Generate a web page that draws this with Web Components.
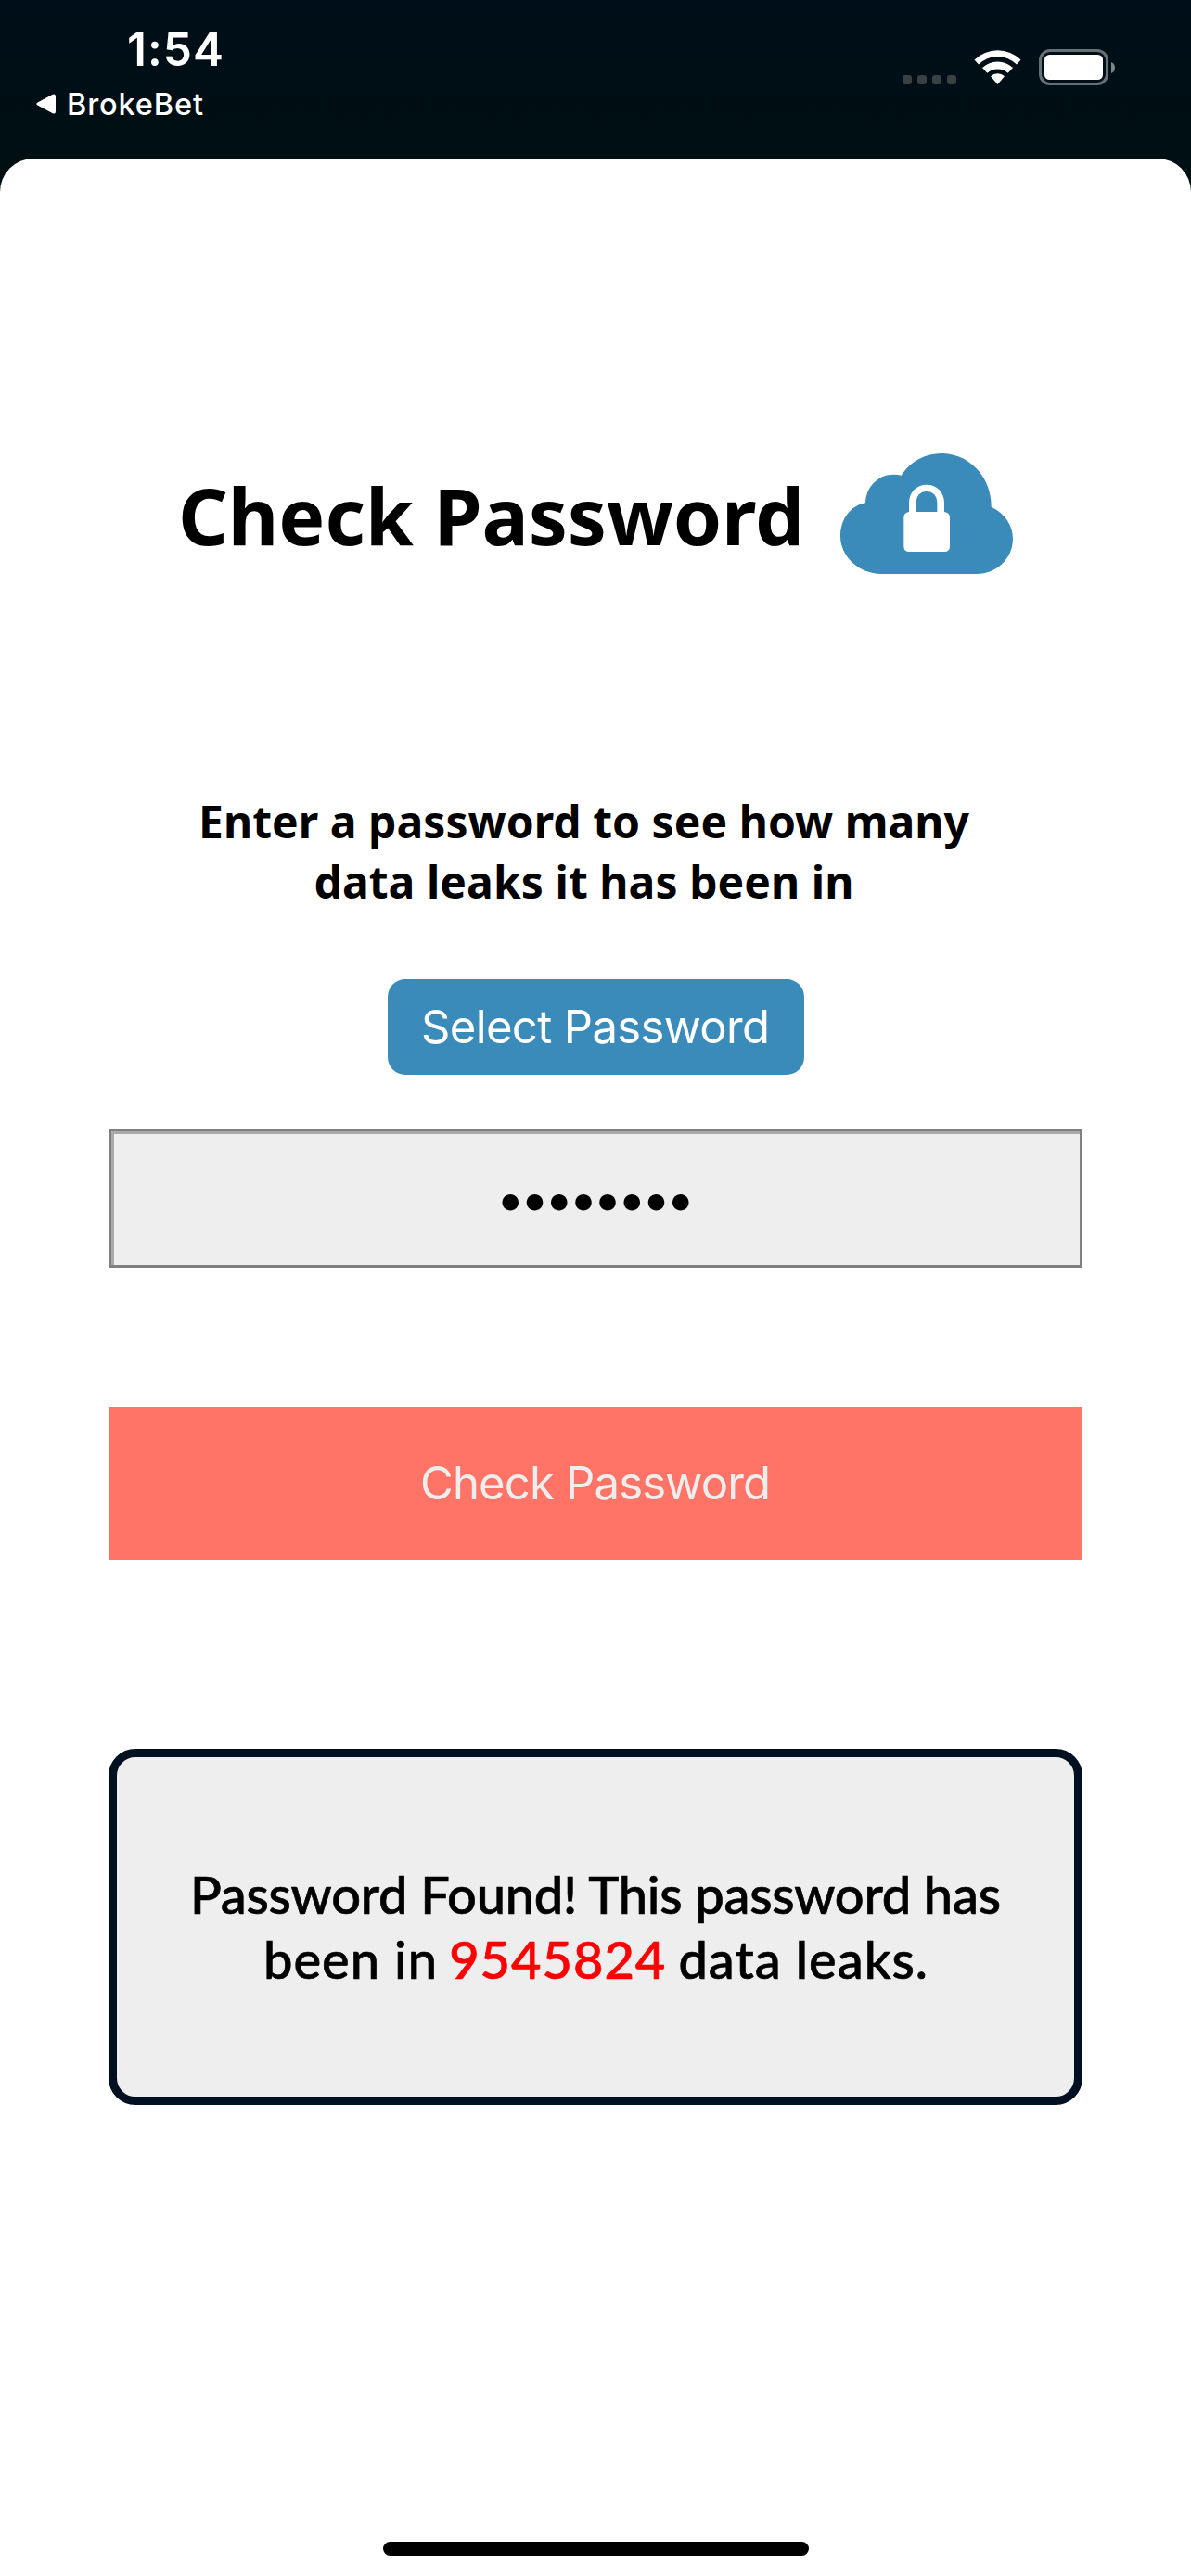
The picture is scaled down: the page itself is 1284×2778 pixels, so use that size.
<!DOCTYPE html>
<html lang="en">
<head>
<meta charset="utf-8">
<meta name="viewport" content="width=device-width">
<title>Check Password</title>
<style>
html,body{margin:0;height:100%;background:#fff}
</style>
</head>
<body>
<password-app></password-app>
<script>
const define = (name, html, setup) => {
  const t = document.createElement('template');
  t.innerHTML = html;
  customElements.define(name, class extends HTMLElement {
    constructor() {
      super();
      this.attachShadow({ mode: 'open' }).append(t.content.cloneNode(true));
    }
    connectedCallback() { if (setup) setup(this); }
  });
};

/* One line of text, tracked so that it spans a given width. */
define('fit-line', `
<style>
  :host{display:block;white-space:nowrap;width:max-content}
  span{display:inline-block}
</style><span><slot></slot></span>`, el => {
  const span = el.shadowRoot.querySelector('span');
  const target = Number(el.getAttribute('span'));
  const chars = el.textContent.trim().length;
  const gap = (target - span.getBoundingClientRect().width) / (chars - 1);
  span.style.letterSpacing = gap + 'px';
  span.style.marginRight = -gap + 'px';
});

define('status-bar', `
<style>
  :host{display:flex;justify-content:space-between;box-sizing:border-box;height:171px;color:#fff;font-family:Inter,sans-serif}
  .left{display:flex;flex-direction:column}
  .time{font-size:49.5px;font-weight:600;line-height:60px;margin:23px 0 0 137px}
  .back{display:flex;align-items:center;gap:12px;margin:8px 0 0 39px;font-size:32.5px;font-weight:450;line-height:40px}
  .back fit-line{margin-top:2px}
  .right{display:flex;align-items:flex-start;margin:53px 81px 0 0}
  svg{display:block}
</style>
<div class="left">
  <fit-line class="time" span="104">1:54</fit-line>
  <div class="back">
    <svg width="21" height="22" viewBox="0 0 21 22"><path d="M2 9.2 17.8.8Q21-.5 21 3V19Q21 22.500 17.800 21.200L2 12.800Q-1.500 11 2 9.200Z" fill="#fff"/></svg>
    <fit-line span="147">BrokeBet</fit-line>
  </div>
</div>
<div class="right">
  <svg width="230" height="40" viewBox="0 0 230 40">
    <g fill="#3a4145"><rect x="0" y="28" width="10" height="10" rx="3"/><rect x="16" y="28" width="10" height="10" rx="3"/><rect x="32" y="28" width="10" height="10" rx="3"/><rect x="48" y="28" width="10" height="10" rx="3"/></g>
    <g fill="#fff">
      <path d="M77.500 11.500A36 36 0 0 1 127.600 11.500L123 16.500A29 29 0 0 0 82 16.500Z"/>
      <path d="M86 20A24 24 0 0 1 119 20L113.700 25.800A16.500 16.500 0 0 0 91.300 25.800Z"/>
      <path d="M95 29.300A11 11 0 0 1 110 29.300L102.500 38Z"/>
    </g>
    <rect x="148.500" y="1.500" width="72" height="36" rx="10.500" fill="none" stroke="#667075" stroke-width="3"/>
    <rect x="153" y="6" width="63" height="27" rx="5.500" fill="#fff"/>
    <path d="M225 14Q229 15.500 229 20T225 26Z" fill="#7d8588"/>
  </svg>
</div>`);

define('cloud-lock', `
<style>:host{display:block;width:186px;height:130px}svg{display:block;width:100%;height:100%}</style>
<svg viewBox="798 57 558 390">
  <path fill="#3a8aba" d="M930 447C860 447 798 392 798 325C798 269 832 225 879 217C881 165 920 125 970 125Q984 125 995 128C1022 85 1070 57 1125 57C1215 57 1287 133 1286 230C1330 250 1356 290 1356 333C1356 395 1305 447 1238 447Z"/>
  <path fill="#fff" d="M1020 246V218C1020 182 1044 158 1077 158S1134 182 1134 218V246Q1152 248 1152 265V357Q1152 375 1134 375H1021Q1003 375 1003 357V265Q1003 248 1020 246Z"/>
  <path fill="#3a8aba" d="M1043 246V218C1043 194 1057 180 1077 180S1111 194 1111 218V246Z"/>
</svg>`);

define('page-title', `
<style>
  :host{display:flex;align-items:flex-start}
  h1{margin:10px 0 0 192px;font:700 84px/114px "Noto Sans","Open Sans",sans-serif;color:#000}
  cloud-lock{margin-left:39px}
</style>
<h1><fit-line span="675">Check Password</fit-line></h1><cloud-lock></cloud-lock>`);

define('select-button', `
<style>
  :host{display:flex}
  button{all:unset;box-sizing:border-box;display:flex;align-items:center;justify-content:center;width:449px;height:103px;border-radius:19px;background:#3a8aba;color:#fff;font:400 49px/60px Inter,sans-serif}
</style><button><fit-line span="376">Select Password</fit-line></button>`);

define('secret-field', `
<style>
  :host{display:flex;align-items:center;justify-content:center;box-sizing:border-box;width:1050px;height:150px;background:#eee;border:3px solid #808080;box-shadow:inset 3px 3px #a9a9a9}
  fit-line{margin-top:2px;font:400 56px/60px Inter,sans-serif;color:#000}
</style><fit-line span="215">••••••••</fit-line>`);

define('check-button', `
<style>
  :host{display:flex}
  button{all:unset;display:flex;align-items:center;justify-content:center;width:1050px;height:165px;background:#ff7466;color:#eee;font:400 49px/60px Inter,sans-serif}
</style><button><fit-line span="378">Check Password</fit-line></button>`);

define('result-card', `
<style>
  :host{display:flex;flex-direction:column;align-items:center;box-sizing:border-box;width:1050px;height:384px;padding-top:113px;border:9px solid #001020;border-radius:29px;background:#eee;font:500 56px/70px Lato,sans-serif;color:#000;-webkit-text-stroke:.7px currentColor}
  b{color:#f00;font-weight:inherit;margin:0 -2px 0 -3px}
</style>
<fit-line span="874">Password Found! This password has</fit-line>
<fit-line span="716">been in <b>9545824</b> data leaks.</fit-line>`);

define('password-app', `
<style>
  :host{display:block;width:1284px;height:2778px;background:linear-gradient(#000e19,#000f12 171px,#000f12)}
  main{display:flex;flex-direction:column;align-items:center;box-sizing:border-box;height:2607px;background:#fff;border-radius:36px 36px 0 0;padding-top:318px}
  page-title{align-self:flex-start}
  .hint{display:flex;flex-direction:column;align-items:center;margin:234px 25px 0 0;font:700 48px/65px "Noto Sans","Open Sans",sans-serif;color:#000}
  select-button{margin-top:73px}
  secret-field{margin-top:58px}
  check-button{margin-top:150px}
  result-card{margin-top:204px}
  .home{width:459px;height:15px;border-radius:8px;background:#000;margin-top:471px}
</style>
<status-bar></status-bar>
<main>
  <page-title></page-title>
  <div class="hint"><fit-line span="831">Enter a password to see how many</fit-line><fit-line span="582">data leaks it has been in</fit-line></div>
  <select-button></select-button>
  <secret-field></secret-field>
  <check-button></check-button>
  <result-card></result-card>
  <div class="home"></div>
</main>`);
</script>
</body>
</html>
